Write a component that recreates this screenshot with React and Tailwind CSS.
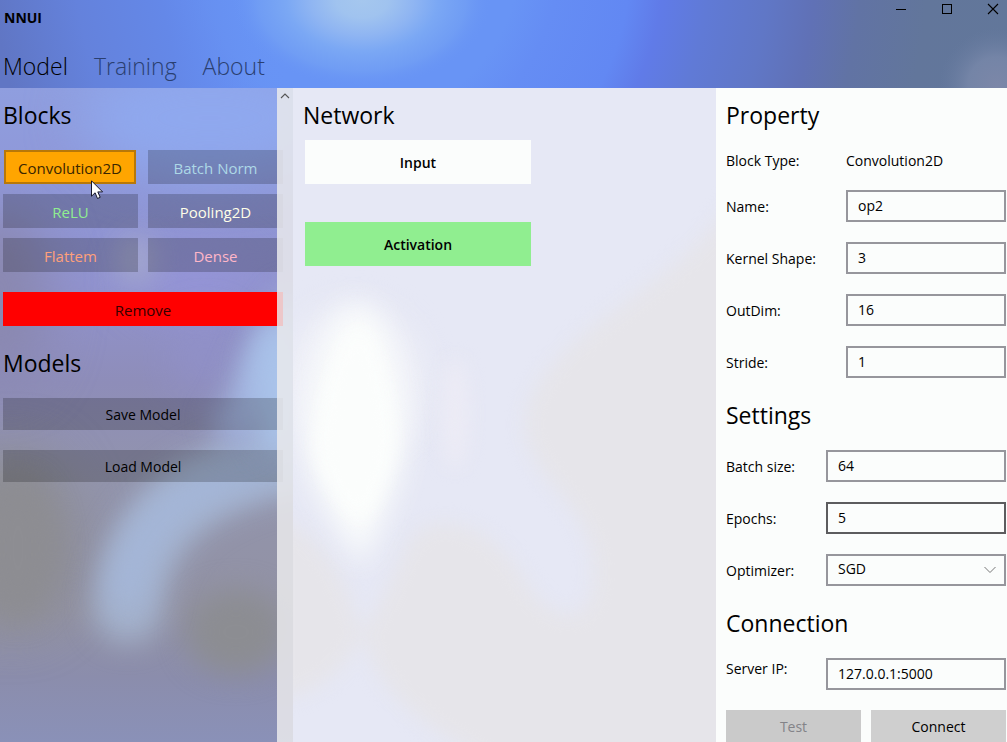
import { useState } from "react";

const HEADING = "pb-0.5 text-[23px] leading-[30px] font-normal text-black";
const FIELD =
  "h-8 w-full min-w-0 flex-1 appearance-none rounded-none border-2 bg-[#fbfdfc] px-2.5 pb-0.5 text-sm text-black outline-none";

const blocks = [
  { name: "Convolution2D", style: "ml-px mr-0.5 border-2 border-[#b87808] bg-[#ffa500] text-[#3a2600]" },
  { name: "Batch Norm", style: "bg-black/20 text-[#add8e6]" },
  { name: "ReLU", style: "bg-black/20 text-[#90ee90]" },
  { name: "Pooling2D", style: "bg-black/20 text-[#ffffe8]" },
  { name: "Flattem", style: "bg-black/20 text-[#ffa07a]" },
  { name: "Dense", style: "bg-black/20 text-[#ffb6c8]" },
];

function HeaderArt() {
  return (
    <svg className="absolute inset-0 size-full" viewBox="0 0 1007 88" preserveAspectRatio="none" aria-hidden="true">
      <defs>
        <radialGradient id="sky" gradientUnits="userSpaceOnUse" cx="360" cy="-40" r="660">
          <stop offset="0" stopColor="#6894f5" />
          <stop offset="0.24" stopColor="#6894f5" />
          <stop offset="0.3" stopColor="#658df4" />
          <stop offset="0.41" stopColor="#6288f3" />
          <stop offset="0.46" stopColor="#607be8" />
          <stop offset="0.53" stopColor="#607ad6" />
          <stop offset="0.62" stopColor="#6077c6" />
          <stop offset="0.69" stopColor="#6071b6" />
          <stop offset="0.76" stopColor="#6173a4" />
          <stop offset="0.86" stopColor="#62769b" />
          <stop offset="1" stopColor="#62779a" />
        </radialGradient>
        <linearGradient id="dusk" gradientUnits="userSpaceOnUse" x1="0" y1="40" x2="270" y2="-20">
          <stop offset="0" stopColor="#6076c4" />
          <stop offset="0.3" stopColor="#6482dc" />
          <stop offset="0.6" stopColor="#6488e8" />
          <stop offset="1" stopColor="#6894f5" stopOpacity="0" />
        </linearGradient>
        <radialGradient id="sun" gradientUnits="userSpaceOnUse" cx="362" cy="0" r="130" gradientTransform="scale(1 0.68)">
          <stop offset="0" stopColor="#a5c7ee" />
          <stop offset="0.2" stopColor="#a0c3ef" />
          <stop offset="0.4" stopColor="#8fb5f2" />
          <stop offset="0.58" stopColor="#7ba8f4" />
          <stop offset="0.8" stopColor="#729ff4" stopOpacity="0.8" />
          <stop offset="1" stopColor="#6894f5" stopOpacity="0" />
        </radialGradient>
        <radialGradient id="corner" gradientUnits="userSpaceOnUse" cx="997" cy="86" r="58">
          <stop offset="0" stopColor="#7c87a8" />
          <stop offset="0.5" stopColor="#7686a8" stopOpacity="0.9" />
          <stop offset="1" stopColor="#687ba0" stopOpacity="0" />
        </radialGradient>
      </defs>
      <rect width="1007" height="88" fill="url(#sky)" />
      <rect width="300" height="88" fill="url(#dusk)" />
      <rect width="1007" height="88" fill="url(#sun)" />
      <rect width="1007" height="88" fill="url(#corner)" />
    </svg>
  );
}

function SidebarArt() {
  return (
    <svg className="absolute inset-0 size-full" viewBox="0 0 293 654" preserveAspectRatio="none" aria-hidden="true">
      <defs>
        <linearGradient id="side" x1="0" y1="0" x2="0" y2="1">
          <stop offset="0" stopColor="#8f9edf" />
          <stop offset="0.17" stopColor="#8f96d6" />
          <stop offset="0.3" stopColor="#9193cf" />
          <stop offset="0.45" stopColor="#8e8db9" />
          <stop offset="0.6" stopColor="#9294ac" />
          <stop offset="0.8" stopColor="#9292a4" />
          <stop offset="0.9" stopColor="#8b8dac" />
          <stop offset="1" stopColor="#8a91b8" />
        </linearGradient>
        <filter id="soft" x="-60%" y="-60%" width="220%" height="220%" colorInterpolationFilters="sRGB">
          <feGaussianBlur stdDeviation="14" />
        </filter>
        <filter id="softer" x="-60%" y="-60%" width="220%" height="220%" colorInterpolationFilters="sRGB">
          <feGaussianBlur stdDeviation="26" />
        </filter>
      </defs>
      <rect width="293" height="654" fill="url(#side)" />
      <ellipse cx="210" cy="30" rx="130" ry="60" fill="#8fa8ee" filter="url(#softer)" />
      <ellipse cx="0" cy="210" rx="50" ry="90" fill="#8a88b0" filter="url(#softer)" />
      <ellipse cx="195" cy="190" rx="55" ry="28" fill="#9594d8" filter="url(#softer)" />
      <ellipse cx="205" cy="270" rx="28" ry="36" fill="#9292d0" opacity="0.8" filter="url(#softer)" />
      <ellipse cx="12" cy="450" rx="62" ry="88" fill="#8d8d92" filter="url(#softer)" />
      <ellipse cx="18" cy="460" rx="38" ry="70" fill="#8d8d92" filter="url(#soft)" />
      <ellipse cx="236" cy="544" rx="50" ry="42" fill="#8c8d92" filter="url(#soft)" />
      <ellipse cx="136" cy="172" rx="20" ry="26" fill="#a6aacc" opacity="0.85" filter="url(#soft)" />
      <path d="M310 368 C205 385 138 425 128 520" fill="none" stroke="#a3b1cc" strokeWidth="70" strokeLinecap="round" filter="url(#soft)" />
      <path d="M310 368 C205 385 138 425 128 500" fill="none" stroke="#a4b6d8" strokeWidth="36" strokeLinecap="round" filter="url(#soft)" />
      <path d="M305 215 C250 270 262 310 225 350" fill="none" stroke="#a2b2de" strokeWidth="44" filter="url(#soft)" />
      <ellipse cx="280" cy="300" rx="30" ry="68" fill="#a9c3ea" filter="url(#soft)" />
    </svg>
  );
}

function CanvasArt() {
  return (
    <svg className="absolute inset-0 size-full" viewBox="0 0 423 654" preserveAspectRatio="none" aria-hidden="true">
      <defs>
        <filter id="haze" x="-60%" y="-60%" width="220%" height="220%" colorInterpolationFilters="sRGB">
          <feGaussianBlur stdDeviation="9" />
        </filter>
        <filter id="glow" x="-60%" y="-60%" width="220%" height="220%" colorInterpolationFilters="sRGB">
          <feGaussianBlur stdDeviation="15" />
        </filter>
      </defs>
      <rect width="423" height="654" fill="#e6e8f5" />
      <path d="M450 90 C410 190 270 230 235 315 C215 385 295 405 300 475 C305 550 250 535 225 480 C190 430 130 420 112 460 C95 500 80 530 68 545 C58 500 30 440 -20 430 L-20 610 C30 610 60 570 70 545 C85 620 160 650 200 680 L450 680 Z" fill="#e6e5ea" filter="url(#haze)" />
      <ellipse cx="60" cy="295" rx="72" ry="78" fill="#eeeff7" filter="url(#glow)" />
      <ellipse cx="162" cy="325" rx="14" ry="55" fill="#ecebf5" filter="url(#haze)" />
      <path d="M65 215 C100 225 112 310 112 355 C108 400 80 445 68 480 C54 445 12 400 12 355 C16 310 28 225 65 215 Z" fill="#fbfdfc" filter="url(#glow)" />
      <path d="M65 240 C88 250 98 320 100 355 C98 390 78 420 68 435 C54 420 24 390 24 355 C28 320 44 250 65 240 Z" fill="#fbfdfc" filter="url(#haze)" />
    </svg>
  );
}

function Row({ id, label, labelWidth, start, children }) {
  return (
    <div className={start ? "flex items-start" : "flex items-center"}>
      <label htmlFor={id} className={`${labelWidth} shrink-0 text-sm text-black ${start ? "leading-[22px]" : "leading-6 pt-0.5"}`}>
        {label}
      </label>
      {children}
    </div>
  );
}

function TextRow({ id, label, value, labelWidth, active, start }) {
  const [text, setText] = useState(value);
  return (
    <Row id={id} label={label} labelWidth={labelWidth} start={start}>
      <input
        id={id}
        type="text"
        value={text}
        onChange={(e) => setText(e.target.value)}
        className={`${FIELD} ${active ? "border-[#5c5c5e]" : "border-[#96969c]"}`}
      />
    </Row>
  );
}

export default function App() {
  return (
    <div className="flex min-h-screen flex-col overflow-hidden bg-[#fbfdfc] font-['Open_Sans','Noto_Sans',sans-serif]">
      <header className="relative h-[88px] shrink-0">
        <HeaderArt />
        <div className="relative flex h-full flex-col justify-between">
          <div className="flex items-start justify-between pr-2">
            <h1 className="pt-2 pl-1 text-sm leading-5 font-bold text-black">NNUI</h1>
            <div className="flex gap-[34px] pt-[3px]">
              <button type="button" aria-label="Minimize" className="size-3">
                <svg viewBox="0 0 12 12" className="size-3" shapeRendering="crispEdges"><path d="M1 6.5h10" stroke="#000" /></svg>
              </button>
              <button type="button" aria-label="Maximize" className="size-3">
                <svg viewBox="0 0 12 12" className="size-3" shapeRendering="crispEdges"><path d="M1.5 1.5h9v9h-9z" fill="none" stroke="#000" /></svg>
              </button>
              <button type="button" aria-label="Close" className="size-3">
                <svg viewBox="0 0 12 12" className="size-3"><path d="M1 1l10 10M11 1L1 11" stroke="#000" strokeWidth="1.1" /></svg>
              </button>
            </div>
          </div>
          <nav className="flex gap-[26px] pb-1.5 pl-[3px] text-[23px] leading-8 font-light">
            <a href="#model" className="text-black">Model</a>
            <a href="#training" className="text-[#2a3f70]">Training</a>
            <a href="#about" className="text-[#2a3f70]">About</a>
          </nav>
        </div>
      </header>

      <main className="flex flex-1">
        <aside className="relative w-[293px] shrink-0">
          <SidebarArt />
          <div className="relative flex w-[283px] flex-col pt-3 pl-[3px]">
            <h2 className={HEADING}>Blocks</h2>
            <div className="mt-[18px] grid grid-cols-2 gap-2.5">
              {blocks.map((b) => (
                <button key={b.name} type="button" className={`flex h-[34px] items-center justify-center pt-0.5 text-[15px] ${b.style}`}>
                  {b.name}
                </button>
              ))}
            </div>
            <button type="button" className="mt-5 flex h-[34px] items-center justify-center bg-[#ff0000] pt-0.5 text-[15px] text-[#300]">
              Remove
            </button>
            <h2 className={`mt-[22px] ${HEADING}`}>Models</h2>
            <div className="mt-[18px] flex flex-col gap-5">
              <button type="button" className="h-8 bg-black/20 pt-0.5 text-sm text-black">Save Model</button>
              <button type="button" className="h-8 bg-black/20 pt-0.5 text-sm text-black">Load Model</button>
            </div>
          </div>
          <div className="absolute inset-y-0 right-0 flex w-4 justify-center bg-[#eaeaec]/85">
            <svg viewBox="0 0 10 16" className="h-4 w-2.5" fill="none" stroke="#555" strokeWidth="1.1" aria-hidden="true">
              <path d="M1 10l4-4 4 4" />
            </svg>
          </div>
          <svg viewBox="0 0 12 20" className="absolute top-[92px] left-[91px] h-5 w-3" aria-hidden="true">
            <path d="M0.5 0.8v15.4l3.6-3.4 2.4 5.7 2.7-1.2-2.4-5.4h4.8z" fill="#fff" stroke="#16162a" strokeLinejoin="round" />
          </svg>
        </aside>

        <section className="relative min-w-0 flex-1">
          <CanvasArt />
          <div className="relative flex flex-col pt-3 pl-2.5">
            <h2 className={HEADING}>Network</h2>
            <div className="mt-2 ml-0.5 flex w-[226px] flex-col gap-[38px]">
              <button type="button" className="h-11 bg-[#fbfdfc] pt-0.5 text-sm font-semibold text-black">Input</button>
              <button type="button" className="h-11 bg-[#90ee90] pt-0.5 text-sm font-semibold text-black">Activation</button>
            </div>
          </div>
        </section>

        <aside className="w-[291px] shrink-0 bg-[#fbfdfc] pt-3 pr-px pl-2.5">
          <h2 className={HEADING}>Property</h2>
          <div className="mt-[18px] flex text-sm leading-[22px] text-black">
            <span className="w-[120px]">Block Type:</span>
            <span>Convolution2D</span>
          </div>
          <div className="mt-[18px] flex flex-col gap-5">
            <TextRow id="name" label="Name:" value="op2" labelWidth="w-[120px]" />
            <TextRow id="kernel" label="Kernel Shape:" value="3" labelWidth="w-[120px]" />
            <TextRow id="outdim" label="OutDim:" value="16" labelWidth="w-[120px]" />
            <TextRow id="stride" label="Stride:" value="1" labelWidth="w-[120px]" />
          </div>

          <h2 className={`mt-[22px] ${HEADING}`}>Settings</h2>
          <div className="mt-[18px] flex flex-col gap-5">
            <TextRow id="batch" label="Batch size:" value="64" labelWidth="w-[100px]" />
            <TextRow id="epochs" label="Epochs:" value="5" labelWidth="w-[100px]" active />
            <Row id="optimizer" label="Optimizer:" labelWidth="w-[100px]">
              <div className="relative flex min-w-0 flex-1">
                <select id="optimizer" defaultValue="SGD" className={`${FIELD} border-[#96969c]`}>
                  <option>SGD</option>
                </select>
                <svg viewBox="0 0 12 8" className="pointer-events-none absolute top-3 right-2.5 h-2 w-3" fill="none" stroke="#777" aria-hidden="true">
                  <path d="M0.5 1l5.5 5.5L11.5 1" />
                </svg>
              </div>
            </Row>
          </div>

          <h2 className={`mt-[22px] ${HEADING}`}>Connection</h2>
          <div className="mt-[18px]">
            <TextRow id="server" label="Server IP:" value="127.0.0.1:5000" labelWidth="w-[100px]" start />
          </div>
          <div className="mt-5 grid grid-cols-2 gap-2.5 text-sm">
            <button type="button" disabled className="h-8 bg-[#cacaca] pt-0.5 text-[#838388]">Test</button>
            <button type="button" className="h-8 bg-[#cfcfcf] pt-0.5 text-black">Connect</button>
          </div>
        </aside>
      </main>
    </div>
  );
}
